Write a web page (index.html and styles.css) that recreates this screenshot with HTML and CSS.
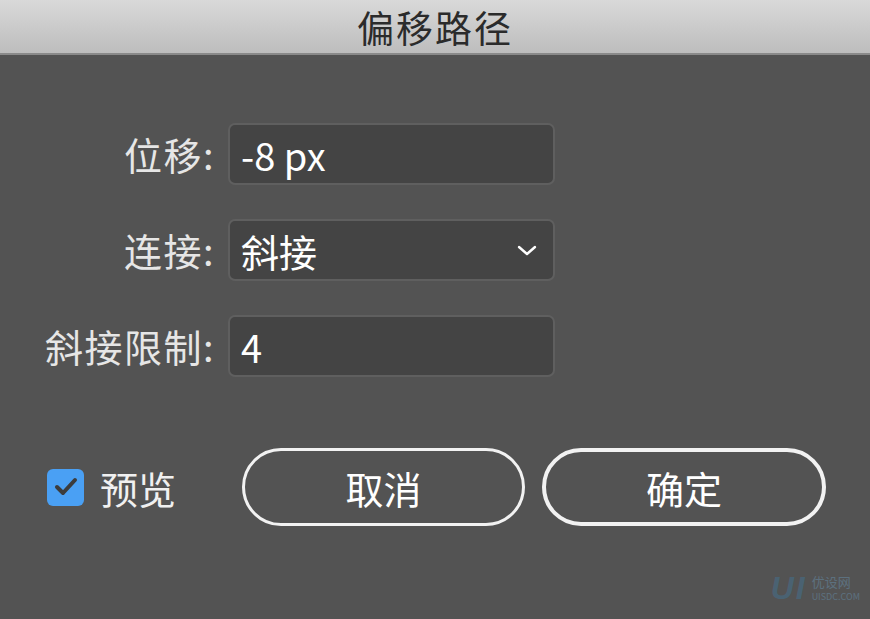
FILE: index.html
```html
<!DOCTYPE html>
<html lang="zh-CN">
<head>
  <meta charset="UTF-8">
  <title>偏移路径</title>
  <link rel="stylesheet" href="styles.css">
</head>
<body>
  <div class="dialog">
    <div class="titlebar">偏移路径</div>
    <div class="form">
      <label class="lbl" for="offset">位移:</label>
      <div class="field"><span id="offset">-8 px</span></div>

      <label class="lbl">连接:</label>
      <div class="field select">
        <span>斜接</span>
        <svg class="chev" width="20" height="12" viewBox="0 0 20 12"><path d="M2 2 L10 9 L18 2" fill="none" stroke="#fff" stroke-width="2.4" stroke-linecap="round" stroke-linejoin="round"/></svg>
      </div>

      <label class="lbl">斜接限制:</label>
      <div class="field"><span>4</span></div>
    </div>
    <div class="actions">
      <div class="preview">
        <span class="check">
          <svg width="26" height="22" viewBox="0 0 26 22"><path d="M4 11 L10 17 L22 4" fill="none" stroke="#3c3c3c" stroke-width="4" stroke-linecap="round" stroke-linejoin="round"/></svg>
        </span>
        <span>预览</span>
      </div>
      <button class="btn">取消</button>
      <button class="btn primary">确定</button>
    </div>
    <div class="mark"><span class="ui">UI</span><span class="cn">优设网<br><small>UISDC.COM</small></span></div>
  </div>
</body>
</html>
```

FILE: styles.css
```css
*{box-sizing:border-box;}
html,body{margin:0;height:100%;}
body{background:#535353;font-family:"Noto Sans CJK SC","Noto Sans",sans-serif;color:#ececec;}
.dialog{position:relative;width:870px;height:619px;overflow:hidden;}
.titlebar{height:55px;background:linear-gradient(#d9d9d9,#bdbdbd);border-bottom:2px solid #8a8a8a;color:#2b2b2b;font-size:37px;line-height:normal;text-align:center;letter-spacing:2px;}
.form{display:grid;grid-template-columns:215px 327px;column-gap:13px;row-gap:34px;padding-top:68px;}
.lbl{justify-self:end;align-self:center;font-size:38px;line-height:44px;letter-spacing:1.5px;color:#e6e6e6;}
.field{height:62px;background:#444444;border:2px solid #5f5f5f;border-radius:7px;display:flex;align-items:center;padding:0 11px;font-size:38px;color:#fff;}
.select{justify-content:space-between;padding-right:16px;}
.chev{margin-top:2px;}
.actions{display:flex;align-items:center;padding:71px 0 0 47px;}
.preview{width:195px;display:flex;align-items:center;gap:16px;font-size:38px;color:#f0f0f0;}
.check{width:37px;height:37px;border-radius:6px;background:#4aa0f4;display:flex;align-items:center;justify-content:center;}
.btn{width:283px;height:78px;border:3px solid #f2f2f2;border-radius:39px;background:transparent;color:#fff;font-family:inherit;font-size:38px;padding:0;}
.btn.primary{margin-left:17px;width:284px;border-width:4px;}
.mark{position:absolute;right:10px;bottom:12px;display:flex;align-items:center;gap:5px;opacity:.35;}
.mark .ui{font:italic bold 32px "Liberation Sans",sans-serif;color:#3b7fae;letter-spacing:2px;}
.mark .cn{font-size:13px;line-height:13px;color:#6fa8d0;}
.mark small{font-size:9px;}
```
